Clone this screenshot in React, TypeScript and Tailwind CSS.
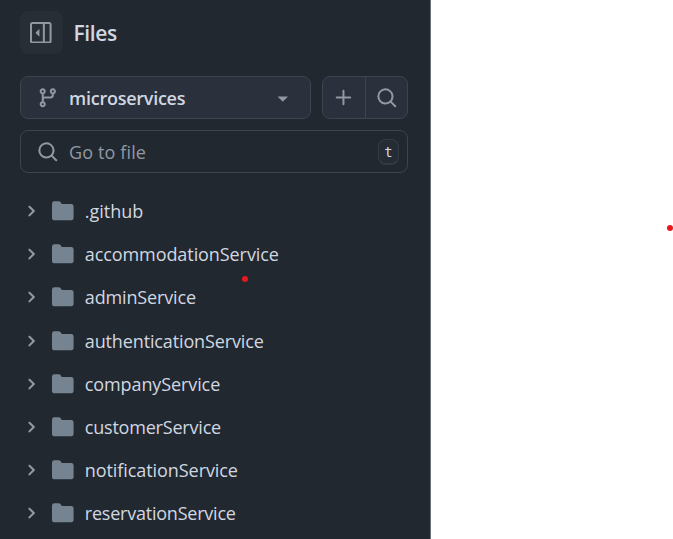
import React from "react";

const PATHS = {
  sidebar:
    "m4.177 7.823 2.396-2.396A.25.25 0 0 1 7 5.604v4.792a.25.25 0 0 1-.427.177L4.177 8.177a.25.25 0 0 1 0-.354ZM0 1.75C0 .784.784 0 1.75 0h12.5C15.216 0 16 .784 16 1.75v12.5A1.75 1.75 0 0 1 14.25 16H1.75A1.75 1.75 0 0 1 0 14.25Zm1.75-.25a.25.25 0 0 0-.25.25v12.5c0 .138.112.25.25.25H9.5v-13Zm12.5 13a.25.25 0 0 0 .25-.25V1.75a.25.25 0 0 0-.25-.25H11v13Z",
  branch:
    "M9.5 3.25a2.25 2.25 0 1 1 3 2.122V6A2.5 2.5 0 0 1 10 8.5H6a1 1 0 0 0-1 1v1.128a2.251 2.251 0 1 1-1.5 0V5.372a2.25 2.25 0 1 1 1.5 0v1.836A2.493 2.493 0 0 1 6 7h4a1 1 0 0 0 1-1v-.628A2.25 2.25 0 0 1 9.5 3.25Zm-6 0a.75.75 0 1 0 1.5 0 .75.75 0 0 0-1.5 0Zm8.25-.75a.75.75 0 1 0 0 1.5.75.75 0 0 0 0-1.5ZM4.25 12a.75.75 0 1 0 0 1.5.75.75 0 0 0 0-1.5Z",
  search:
    "M10.68 11.74a6 6 0 0 1-7.922-8.982 6 6 0 0 1 8.982 7.922l3.04 3.04a.749.749 0 0 1-.326 1.275.749.749 0 0 1-.734-.215ZM11.5 7a4.499 4.499 0 1 0-8.997 0A4.499 4.499 0 0 0 11.5 7Z",
  plus: "M7.75 2a.75.75 0 0 1 .75.75V7h4.25a.75.75 0 0 1 0 1.5H8.5v4.25a.75.75 0 0 1-1.5 0V8.5H2.75a.75.75 0 0 1 0-1.5H7V2.75A.75.75 0 0 1 7.75 2Z",
  caret:
    "m4.427 7.427 3.396 3.396a.25.25 0 0 0 .354 0l3.396-3.396A.25.25 0 0 0 11.396 7H4.604a.25.25 0 0 0-.177.427Z",
  folder:
    "M1.75 1A1.75 1.75 0 0 0 0 2.75v10.5C0 14.216.784 15 1.75 15h12.5A1.75 1.75 0 0 0 16 13.25v-8.5A1.75 1.75 0 0 0 14.25 3H7.5a.25.25 0 0 1-.2-.1l-.9-1.2C6.07 1.26 5.55 1 5 1H1.75Z",
};

function Icon({ name, className = "" }: { name: keyof typeof PATHS; className?: string }) {
  return (
    <svg viewBox="0 0 16 16" className={`size-[21.6px] shrink-0 ${className}`} fill="currentColor" aria-hidden="true">
      <path d={PATHS[name]} />
    </svg>
  );
}

function Chevron() {
  return (
    <svg viewBox="0 0 12 12" className="size-[16.2px] shrink-0" fill="currentColor" aria-hidden="true">
      <path d="M4.7 10c-.2 0-.4-.1-.5-.2-.3-.3-.3-.8 0-1.1L6.9 6 4.2 3.3c-.3-.3-.3-.8 0-1.1.3-.3.8-.3 1.1 0l3.3 3.2c.3.3.3.8 0 1.1L5.3 9.7c-.2.2-.4.3-.6.3Z" />
    </svg>
  );
}

// Rows are 43px tall; the fourth one carries an extra pixel of leading space.
const FOLDERS = [
  { name: ".github", tracking: "tracking-[0px]", row: "h-[43px]" },
  { name: "accommodationService", tracking: "tracking-[-0.08px]", row: "h-[43px]" },
  { name: "adminService", tracking: "tracking-[-0.14px]", row: "h-[43px]" },
  { name: "authenticationService", tracking: "tracking-[-0.13px]", row: "mt-px h-[43px]" },
  { name: "companyService", tracking: "tracking-[-0.1px]", row: "h-[43px]" },
  { name: "customerService", tracking: "tracking-[-0.2px]", row: "h-[43px]" },
  { name: "notificationService", tracking: "tracking-[-0.07px]", row: "h-[43px]" },
  { name: "reservationService", tracking: "tracking-[-0.22px]", row: "h-[43px]" },
];

export default function App() {
  return (
    <div className="relative h-[539px] w-[673px] overflow-hidden bg-white font-['Open_Sans','Noto_Sans',sans-serif] text-[#d1d7e0]">
      <aside className="h-full w-[431px] overflow-hidden border-r border-[#6c7278] bg-[#212830] pl-5 pr-[22px] pt-[11px] text-[#9198a1]">
        <header className="flex h-[43px] items-center">
          <button className="flex size-[43px] items-center justify-center rounded-lg bg-[#282e36] pr-px">
            <Icon name="sidebar" />
          </button>
          <h1 className="ml-[10.5px] pt-0.5 text-[21px] font-semibold leading-[43px] tracking-[-0.4px] text-[#d1d7e0]">Files</h1>
        </header>

        <div className="mt-[22px] flex h-[43px] gap-[11px]">
          <button className="flex w-[291px] items-center rounded-lg border border-[#3d444d] bg-[#2a303c] pl-4">
            <Icon name="branch" />
            <span className="ml-[10.5px] flex-1 pt-0.5 text-left text-[18px] font-semibold tracking-[-0.26px] text-[#d1d7e0]">microservices</span>
            <Icon name="caret" className="mr-4" />
          </button>
          <div className="flex flex-1 divide-x divide-[#3d444d] rounded-lg border border-[#3d444d] bg-[#2a303c]">
            <button className="flex w-[43px] items-center justify-center">
              <Icon name="plus" />
            </button>
            <button className="flex flex-1 items-center justify-center pl-px">
              <Icon name="search" />
            </button>
          </div>
        </div>

        <div className="mt-[11px] flex h-[43px] items-center rounded-lg border border-[#3d444d] pl-4 pr-2">
          <Icon name="search" />
          <span className="ml-[10.5px] flex-1 pt-0.5 text-[18px] tracking-[0.12px]">Go to file</span>
          <kbd className="mt-px flex h-[26px] w-[21px] items-center justify-center rounded-lg border border-b-2 border-[#343b44] bg-[#262c35] pt-px font-['DejaVu_Sans_Mono',monospace] text-[14px] leading-none text-[#d1d7e0]">
            t
          </kbd>
        </div>

        <ul className="mt-[17px]">
          {FOLDERS.map((folder) => (
            <li key={folder.name} className={`flex items-center pl-[3px] ${folder.row}`}>
              <Chevron />
              <Icon name="folder" className="mb-px ml-[12.8px] text-[#768390]" />
              <span className={`ml-[11.2px] whitespace-nowrap text-[18px] text-[#d1d7e0] ${folder.tracking}`}>{folder.name}</span>
            </li>
          ))}
        </ul>
      </aside>

      <span className="absolute left-[242px] top-[276px] size-1.5 rounded-full bg-[#e6191c]" />
      <span className="absolute left-[667px] top-[225px] size-1.5 rounded-full bg-[#e6191c]" />
    </div>
  );
}
